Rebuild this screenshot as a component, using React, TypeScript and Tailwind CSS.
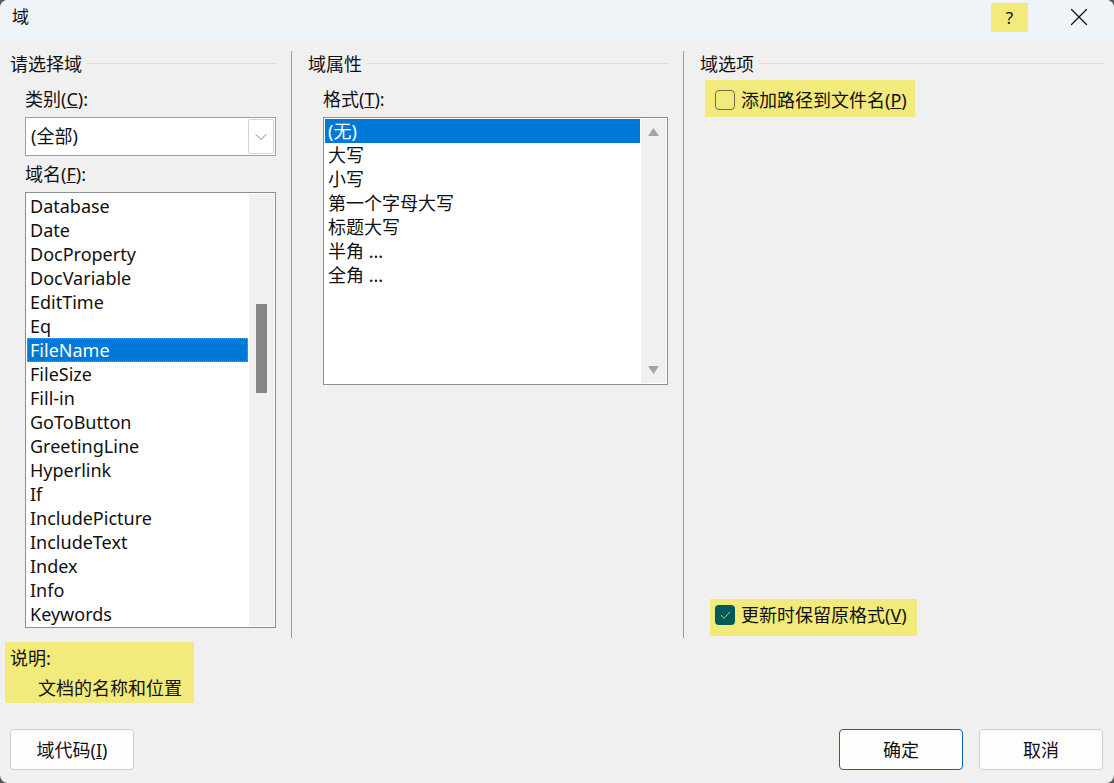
import { Check, ChevronDown, X } from "lucide-react";

const FONT = "font-['Noto_Sans','Noto_Sans_CJK_SC',sans-serif]";

const fieldNames = [
  "Database",
  "Date",
  "DocProperty",
  "DocVariable",
  "EditTime",
  "Eq",
  "FileName",
  "FileSize",
  "Fill-in",
  "GoToButton",
  "GreetingLine",
  "Hyperlink",
  "If",
  "IncludePicture",
  "IncludeText",
  "Index",
  "Info",
  "Keywords",
];

const formats = ["(无)", "大写", "小写", "第一个字母大写", "标题大写", "半角 ...", "全角 ..."];

const GroupTitle = ({ title }: { title: string }) => (
  <div className="flex h-6 items-center gap-[5px]">
    <span className="whitespace-nowrap">{title}</span>
    <div className="-mt-[2px] h-px flex-1 bg-[#dcdcdc]" />
  </div>
);

const Divider = () => <div className="w-px shrink-0 bg-[#9a9a9a]" />;

const App = () => {
  return (
    <div className={`${FONT} h-[783px] w-[1114px] overflow-hidden bg-[#5a5a5a] text-[18px] leading-6 text-[#111]`}>
      <div className="flex h-full flex-col overflow-hidden rounded-[8px] bg-[#f0f0f0]">
        {/* Title bar */}
        <div className="flex h-[39px] shrink-0 items-center bg-[#eff4f9] pl-3">
          <span className="-mt-[5px] flex-1 text-[17px]">域</span>
          <div className="-mt-[4px] flex h-[29px] w-[37px] items-center justify-center bg-[#f2ea7a] text-[17px]">?</div>
          <div className="-mt-[6px] ml-[36px] mr-[20px] flex w-[30px] justify-center">
            <X size={30} strokeWidth={1} />
          </div>
        </div>

        {/* Columns */}
        <div className="mt-3 flex h-[587px] shrink-0 pl-[10px] pr-[10px]">
          <div className="mr-[15px] flex w-[266px] shrink-0 flex-col pt-[1px]">
            <GroupTitle title="请选择域" />
            <div className="ml-[15px] mt-3">
              <div className="h-6 leading-[22px]">类别(<u>C</u>):</div>
              <div className="mt-[5px] flex h-[39px] items-center border-[1.5px] border-[#a0a0a0] bg-white pl-[5px] pr-[1px]">
                <span className="-mt-[2px] flex-1">(全部)</span>
                <div className="flex h-[35px] w-[26px] items-center justify-center rounded-[2px] border border-[#d4d4d4] bg-white text-[#666]">
                  <ChevronDown size={20} strokeWidth={1} />
                </div>
              </div>
              <div className="mt-[7px] h-6 leading-[22px]">域名(<u>F</u>):</div>
              <div className="mt-[5px] flex h-[436px] border-[1.5px] border-[#8e8e92] bg-white p-[1px]">
                <div className="flex-1 overflow-hidden">
                  {fieldNames.map((name) =>
                    name === "FileName" ? (
                      <div
                        key={name}
                        className="h-6 border border-dotted border-[#e8862a] bg-[#0078d7] pl-[2px] leading-[22px] text-white"
                      >
                        {name}
                      </div>
                    ) : (
                      <div key={name} className="h-6 pl-[3px]">
                        {name}
                      </div>
                    )
                  )}
                </div>
                <div className="ml-[1px] flex w-[25px] flex-col items-center bg-[#f0f0f0]">
                  <div className="mt-[110px] h-[89px] w-[11px] bg-[#868686]" />
                </div>
              </div>
            </div>
          </div>
          <Divider />

          <div className="ml-[16px] mr-[15px] flex w-[360px] shrink-0 flex-col pt-[1px]">
            <GroupTitle title="域属性" />
            <div className="ml-[15px] mt-3">
              <div className="h-6 leading-[22px]">格式(<u>T</u>):</div>
              <div className="mt-[5px] flex h-[268px] border-[1.5px] border-[#8e8e92] bg-white p-[1px]">
                <div className="flex-1">
                  {formats.map((format, i) => (
                    <div key={format} className={i === 0 ? "h-6 bg-[#0078d7] pl-[3px] text-white" : "h-6 pl-[3px]"}>
                      {format}
                    </div>
                  ))}
                </div>
                <div className="ml-[1px] flex w-[25px] flex-col items-center justify-between bg-[#f0f0f0] py-[9px] text-[#a3a3a3]">
                  <svg width="11" height="8" viewBox="0 0 11 8" fill="currentColor">
                    <path d="M5.5 0 L11 8 H0 Z" />
                  </svg>
                  <svg width="11" height="8" viewBox="0 0 11 8" fill="currentColor">
                    <path d="M0 0 H11 L5.5 8 Z" />
                  </svg>
                </div>
              </div>
            </div>
          </div>
          <Divider />

          <div className="ml-[16px] flex flex-1 flex-col pt-[1px]">
            <GroupTitle title="域选项" />
            <div className="ml-[5px] mt-1 flex h-[37px] w-[210px] items-start bg-[#f2ea7a] pl-[10px] pt-[8px]">
              <div className="mt-[2px] h-5 w-5 rounded-[4px] border border-[#6b6a45]" />
              <span className="ml-[6px] whitespace-nowrap">添加路径到文件名(<u>P</u>)</span>
            </div>
            <div className="ml-[10px] mt-[482px] flex h-[37px] w-[207px] items-start bg-[#f2ea7a] pl-[5px] pt-[4px]">
              <div className="mt-[2px] flex h-5 w-5 items-center justify-center rounded-[4px] bg-[#005a5a] text-[#f2ea7a]">
                <Check size={13} strokeWidth={1.5} />
              </div>
              <span className="ml-[6px] whitespace-nowrap">更新时保留原格式(<u>V</u>)</span>
            </div>
          </div>
        </div>

        {/* Description */}
        <div className="ml-[5px] mt-[4px] h-[61px] w-[189px] bg-[#f2ea7a] pl-[5px] pt-[4px]">
          <div>说明:</div>
          <div className="ml-[28px] mt-[6px]">文档的名称和位置</div>
        </div>

        {/* Buttons */}
        <div className="mt-[26px] flex pl-[10px] pr-[11px]">
          <button className="h-[41px] w-[124px] rounded-[4px] border border-[#d0d0d0] bg-[#fdfdfd]">域代码(<u>I</u>)</button>
          <button className="ml-auto h-[41px] w-[124px] rounded-[4px] border-[1.5px] border-[#0067c0] bg-[#fdfdfd]">确定</button>
          <button className="ml-4 h-[41px] w-[124px] rounded-[4px] border border-[#d0d0d0] bg-[#fdfdfd]">取消</button>
        </div>
      </div>
    </div>
  );
};

export default App;
